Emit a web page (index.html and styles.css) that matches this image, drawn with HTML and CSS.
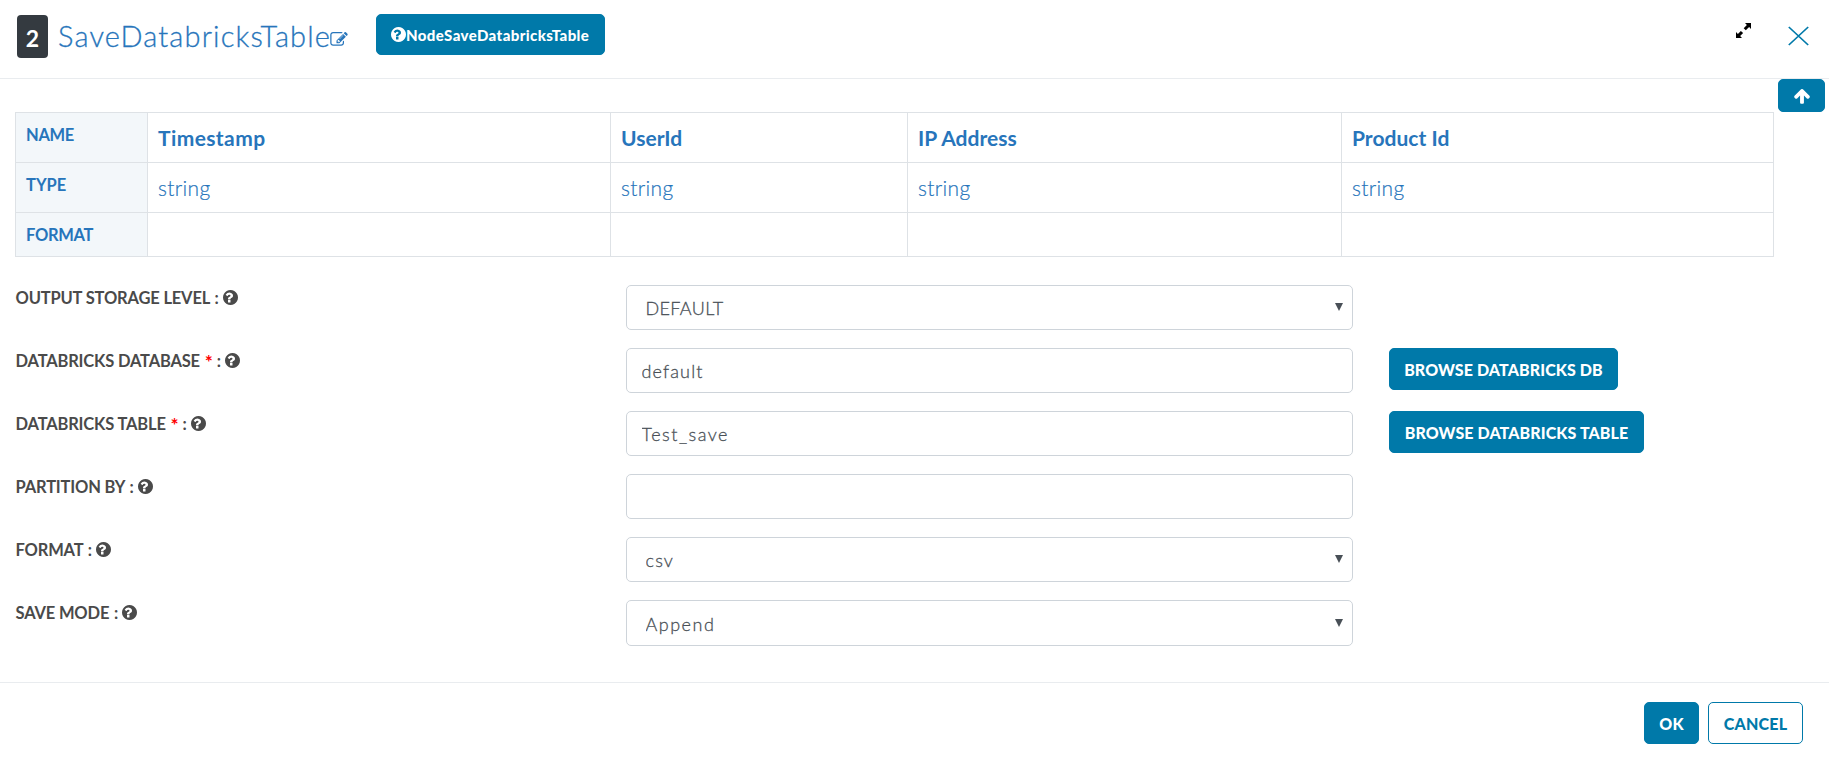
FILE: index.html
```html
<!DOCTYPE html>
<html lang="en">
<head>
<meta charset="utf-8">
<title>SaveDatabricksTable</title>
<link rel="stylesheet" href="styles.css">
</head>
<body>
<svg class="sprite" aria-hidden="true">
  <symbol id="help" viewBox="128 128 1536 1536"><path d="M896 1376v-192q0-14-9-23t-23-9h-192q-14 0-23 9t-9 23v192q0 14 9 23t23 9h192q14 0 23-9t9-23zm256-672q0-88-55.500-163t-138.500-116-170-41q-243 0-371 213-15 24 8 42l132 100q7 6 19 6 16 0 25-12 53-68 86-92 34-24 86-24 48 0 85.500 26t37.500 59q0 38-20 61t-68 45q-63 28-115.500 86.500t-52.500 125.500v36q0 14 9 23t23 9h192q14 0 23-9t9-23q0-19 21.500-49.500t54.500-49.500q32-18 49-28.500t46-35 44.500-48 28-60.500 12.500-81zm512 192q0 209-103 385.500t-279.500 279.500-385.500 103-385.500-103-279.500-279.500-103-385.500 103-385.500 279.500-279.500 385.500-103 385.500 103 279.500 279.500 103 385.500z"/></symbol>
</svg>
<header class="header">
  <span class="step">2</span>
  <h1 class="title">SaveDatabricksTable</h1>
  <svg class="edit" viewBox="0 128 1792 1536"><path d="M888 1184l116-116-152-152-116 116v56h96v96h56zm440-720q-16-16-33 1l-350 350q-17 17-1 33t33-1l350-350q17-17 1-33zm80 594v190q0 119-84.500 203.500t-203.500 84.500h-832q-119 0-203.500-84.500t-84.500-203.500v-832q0-119 84.500-203.500t203.500-84.500h832q63 0 117 25 15 7 18 23 3 17-9 29l-49 49q-14 14-32 8-23-6-45-6h-832q-66 0-113 47t-47 113v832q0 66 47 113t113 47h832q66 0 113-47t47-113v-126q0-13 9-22l64-64q15-15 35-7t20 29zm-96-738l288 288-672 672h-288v-288zm444 132l-92 92-288-288 92-92q28-28 68-28t68 28l152 152q28 28 28 68t-28 68z"/></svg>
  <button class="btn node"><svg class="help"><use href="#help"/></svg>NodeSaveDatabricksTable</button>
  <svg class="expand" viewBox="0 0 15 15"><path d="M9 0h6v6l-1.900-1.900-3.300 3.200-2.100-2.100 3.200-3.300zM0 9l1.900 1.900 3-3 2.200 2.200-3 3L6 15H0z"/></svg>
  <svg class="close" viewBox="0 0 21 20"><path d="M.8 1l19.400 18M20.200 1L.8 19"/></svg>
</header>
<main class="body">
  <div class="content">
    <table class="schema">
      <colgroup><col class="c0"><col class="c1"><col class="c2"><col class="c3"><col class="c4"></colgroup>
      <tr class="tall"><th>NAME</th><td><b class="ls-4">Timestamp</b></td><td><b>UserId</b></td><td><b>IP Address</b></td><td><b>Product Id</b></td></tr>
      <tr class="tall"><th class="ls-0">TYPE</th><td>string</td><td>string</td><td>string</td><td>string</td></tr>
      <tr class="short"><th>FORMAT</th><td></td><td></td><td></td><td></td></tr>
    </table>
    <form class="form">
      <div class="row">
        <label class="label">OUTPUT STORAGE LEVEL <span class="colon">:</span> <svg class="help"><use href="#help"/></svg></label>
        <div class="select"><select class="control ls-4"><option>DEFAULT</option></select></div>
      </div>
      <div class="row">
        <label class="label">DATABRICKS DATABASE <span class="required">*</span> <span class="colon">:</span> <svg class="help"><use href="#help"/></svg></label>
        <input class="control ls-11" value="default">
        <button type="button" class="btn browse db">BROWSE DATABRICKS DB</button>
      </div>
      <div class="row">
        <label class="label">DATABRICKS TABLE <span class="required">*</span> <span class="colon">:</span> <svg class="help"><use href="#help"/></svg></label>
        <input class="control ls-15" value="Test_save">
        <button type="button" class="btn browse tbl">BROWSE DATABRICKS TABLE</button>
      </div>
      <div class="row">
        <label class="label">PARTITION BY <span class="colon">:</span> <svg class="help"><use href="#help"/></svg></label>
        <input class="control" value="">
      </div>
      <div class="row">
        <label class="label">FORMAT <span class="colon">:</span> <svg class="help"><use href="#help"/></svg></label>
        <div class="select"><select class="control ls-11"><option>csv</option></select></div>
      </div>
      <div class="row">
        <label class="label">SAVE MODE <span class="colon">:</span> <svg class="help"><use href="#help"/></svg></label>
        <div class="select last"><select class="control ls-15"><option>Append</option></select></div>
      </div>
    </form>
  </div>
  <button class="btn up" aria-label="Scroll to top"><svg viewBox="0 0 1792 1792"><path d="M1675 971q0 51-37 90l-75 75q-38 38-91 38-54 0-90-38l-294-293v704q0 52-37.500 84.500t-90.500 32.500h-128q-53 0-90.500-32.500t-37.500-84.500v-704l-294 293q-36 38-90 38t-90-38l-75-75q-38-38-38-90 0-53 38-91l651-651q35-37 90-37 54 0 91 37l651 651q37 39 37 91z"/></svg></button>
</main>
<footer class="footer">
  <button class="btn ok">OK</button>
  <button class="btn cancel">CANCEL</button>
</footer>
</body>
</html>
```
FILE: styles.css
```css
* { box-sizing: border-box; }
body { margin: 0; height: 758px; display: flex; flex-direction: column; font-family: Lato, "Open Sans", sans-serif; background: #fff; overflow: hidden; }
.sprite { position: absolute; width: 0; height: 0; }
svg { display: block; flex: none; }

.ls-4 { letter-spacing: .35px; }
.ls-11 { letter-spacing: 1.15px; }
.ls-15 { letter-spacing: 1.5px; }

.header { display: flex; align-items: flex-start; height: 79px; flex: none; padding: 14px 20px 0 17px; border-bottom: 1px solid #e9ecef; }
.step { width: 31px; height: 43px; margin-top: 1px; border-radius: 4px; background: #343a40; color: #fff; font-size: 23px; font-weight: 700; line-height: 46px; text-align: center; }
.title { width: 272px; margin: 2px 0 0 10px; color: #2775bb; font-size: 29px; font-weight: 300; line-height: 40px; letter-spacing: 1.14px; white-space: nowrap; -webkit-text-stroke: .3px #2775bb; }
.edit { width: 18px; height: 15px; margin: 18px 0 0; fill: #2775bb; }
.help { display: inline-block; width: 15px; height: 15px; fill: currentColor; }

.btn { display: block; height: 42px; padding: 1px 14px 0; border: 1px solid #0079a9; border-radius: 5px; background: #0079a9; color: #fff; font: 900 16px/38px Lato, sans-serif; letter-spacing: .1px; white-space: nowrap; }
.node { display: flex; align-items: center; width: 229px; height: 41px; margin-left: 28px; padding: 1px 14px 0; font-size: 15px; letter-spacing: .4px; }
.node .help { margin-top: -2px; }
.expand { width: 15px; height: 15px; margin: 9px 0 0 auto; fill: #000; }
.close { width: 21px; height: 20px; margin: 12px 0 0 37px; fill: none; stroke: #0079a9; stroke-width: 1.7; }

.body { display: flex; align-items: flex-start; height: 603px; flex: none; padding-left: 15px; }
.content { width: 1759px; padding-top: 33px; }
.up { display: flex; align-items: center; justify-content: center; width: 47px; height: 33px; margin-left: 4px; padding: 0; }
.up svg { width: 18px; height: 18px; fill: #fff; }

.schema { width: 1759px; table-layout: fixed; border-collapse: collapse; color: #2775bb; }
.schema th, .schema td { padding: 10px 10px 0; border: 1px solid #dee2e6; text-align: left; vertical-align: top; font-size: 21px; font-weight: 300; line-height: 30px; letter-spacing: .35px; }
.schema td { -webkit-text-stroke: .2px #2775bb; }
.schema th { background: #f3f7fa; font-size: 16.5px; font-weight: 700; line-height: 25px; letter-spacing: -.3px; }
.schema th.ls-0 { letter-spacing: 0; }
.schema b { font-weight: 700; letter-spacing: .03px; -webkit-text-stroke: 0; }
.schema b.ls-4 { letter-spacing: .4px; }
.c0 { width: 132px; }
.c1 { width: 463px; }
.c2 { width: 297px; }
.c3 { width: 434px; }
.tall { height: 50px; }
.short { height: 44px; }

.form { display: grid; gap: 18px; margin-top: 28px; }
.row { display: grid; grid-template-columns: 611px 727px auto; align-items: start; }
.label { display: flex; align-items: center; height: 26px; padding-left: .5px; color: #4a4a4a; font-size: 16.5px; font-weight: 700; letter-spacing: -.17px; white-space: pre; }
.colon { margin-left: 1px; }
.label .help { margin: -1px 0 0 4px; }
.required { margin: 2px 0 0 1px; color: #f00; font-size: 19px; line-height: 20px; }
.required + .colon { margin-left: 4px; }
.control { display: block; width: 727px; height: 45px; margin: 0; padding: 1px 14.5px 0; border: 1px solid #ced4da; border-radius: 5px; outline: 0; background: #fff; color: #495057; font-family: Lato, sans-serif; font-size: 18px; font-weight: 300; -webkit-text-stroke: .3px #495057; appearance: none; }
select.control { padding-left: 18.5px; }
.select { position: relative; }
.select::after { content: ""; position: absolute; top: 18px; right: 10px; border: 4px solid transparent; border-top: 8px solid #495057; border-bottom: 0; pointer-events: none; }
.last .control { height: 46px; }
.last::after { top: 19px; }
.browse { justify-self: start; margin-left: 36px; }
.db { width: 229px; }
.tbl { width: 255px; }

.footer { display: flex; gap: 9px; justify-content: flex-end; flex: 1; padding: 19px 26px 0 0; border-top: 1px solid #e9ecef; }
.ok { width: 55px; }
.cancel { width: 95px; background: #fff; color: #0079a9; letter-spacing: .2px; }
```
